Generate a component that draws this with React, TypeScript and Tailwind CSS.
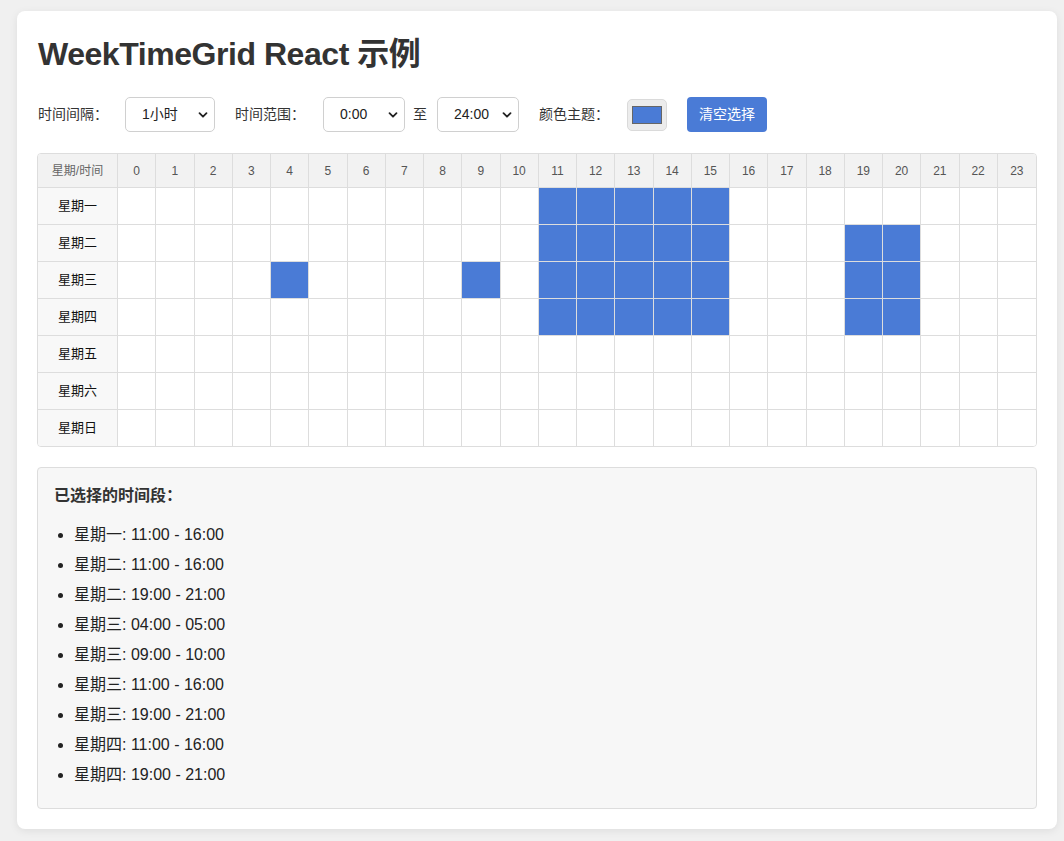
import React from "react";

const FONT = { fontFamily: '"Liberation Sans", "Noto Sans CJK SC", sans-serif' };

const days = ["星期一", "星期二", "星期三", "星期四", "星期五", "星期六", "星期日"];
const hours = Array.from({ length: 24 }, (_, i) => i);

// selected hours per day index
const selected: Record<number, number[]> = {
  0: [11, 12, 13, 14, 15],
  1: [11, 12, 13, 14, 15, 19, 20],
  2: [4, 9, 11, 12, 13, 14, 15, 19, 20],
  3: [11, 12, 13, 14, 15, 19, 20],
};

const ranges = [
  "星期一: 11:00 - 16:00",
  "星期二: 11:00 - 16:00",
  "星期二: 19:00 - 21:00",
  "星期三: 04:00 - 05:00",
  "星期三: 09:00 - 10:00",
  "星期三: 11:00 - 16:00",
  "星期三: 19:00 - 21:00",
  "星期四: 11:00 - 16:00",
  "星期四: 19:00 - 21:00",
];

function Chevron() {
  return (
    <svg width="10" height="10" viewBox="0 0 10 10" className="shrink-0">
      <path d="M1.5 3.2 L5 6.7 L8.5 3.2" fill="none" stroke="#222" strokeWidth="1.8" strokeLinecap="round" strokeLinejoin="round" />
    </svg>
  );
}

function FakeSelect({ value, width, className = "" }: { value: string; width: string; className?: string }) {
  return (
    <div
      className={`${width} ${className} h-[35px] flex items-center justify-between pl-[16px] pr-[6px] bg-white border border-[#d0d0d0] rounded-[5px] text-[14px] text-[#222]`}
    >
      <span>{value}</span>
      <Chevron />
    </div>
  );
}

export default function App() {
  return (
    <div className="min-h-screen bg-[#f0f0f0] pt-[11px] pb-[12px]" style={FONT}>
      <div className="ml-[17px] w-[1040px] bg-white rounded-[8px] shadow-[0_2px_8px_rgba(0,0,0,0.08)] px-[20px] pt-[23px] pb-[20px]">
        <h1 className="text-[32px] leading-[40px] font-bold text-[#333] tracking-[-0.45px] pl-[1px]">
          WeekTimeGrid React 示例
        </h1>

        {/* Controls */}
        <div className="mt-[23px] pl-[1px] flex items-center text-[14px] text-[#333]">
          <span>时间间隔：</span>
          <FakeSelect value="1小时" width="w-[90px]" className="ml-[17px]" />
          <span className="ml-[20px]">时间范围：</span>
          <FakeSelect value="0:00" width="w-[82px]" className="ml-[18px]" />
          <span className="ml-[8px]">至</span>
          <FakeSelect value="24:00" width="w-[82px]" className="ml-[10px]" />
          <span className="ml-[20px]">颜色主题：</span>
          <div className="ml-[18px] w-[40px] h-[32px] rounded-[5px] bg-[#ececec] border border-[#dadada] flex items-center justify-center">
            <div className="w-[30px] h-[18px] bg-[#4a7bd6] border border-[#666]" />
          </div>
          <button
            type="button"
            className="ml-[20px] h-[35px] px-[12px] rounded-[4px] bg-[#4a7bd6] text-white text-[14px]"
          >
            清空选择
          </button>
        </div>

        {/* Grid */}
        <div className="mt-[21px] w-[1000px] border border-[#dddddd] rounded-[4px] overflow-hidden">
          <div className="grid grid-cols-[80px_repeat(24,minmax(0,1fr))]">
            <div className="h-[34px] flex items-center justify-center bg-[#f2f2f2] border-r border-b border-[#dddddd] text-[12px] text-[#666]">
              星期/时间
            </div>
            {hours.map((h) => (
              <div
                key={h}
                className={`h-[34px] flex items-center justify-center bg-[#f2f2f2] border-b border-[#dddddd] text-[12px] text-[#555] ${h < 23 ? "border-r" : ""}`}
              >
                {h}
              </div>
            ))}
            {days.map((d, di) => (
              <React.Fragment key={d}>
                <div
                  className={`flex items-center justify-center bg-[#f8f8f8] border-r border-[#dddddd] text-[13px] text-[#111] ${di < 6 ? "border-b h-[37px]" : "h-[36px]"}`}
                >
                  {d}
                </div>
                {hours.map((h) => {
                  const on = (selected[di] || []).includes(h);
                  return (
                    <div
                      key={h}
                      className={`border-[#dddddd] ${on ? "bg-[#4a7bd6]" : "bg-white"} ${h < 23 ? "border-r" : ""} ${di < 6 ? "border-b h-[37px]" : "h-[36px]"}`}
                    />
                  );
                })}
              </React.Fragment>
            ))}
          </div>
        </div>

        {/* Selected ranges */}
        <div className="mt-[20px] w-[1000px] bg-[#f7f7f7] border border-[#dddddd] rounded-[4px] px-[16px] pt-[18px] pb-[18px]">
          <h4 className="text-[16px] leading-[20px] font-bold text-[#333]">已选择的时间段：</h4>
          <ul className="mt-[14px] pl-[20px] list-disc text-[16px] text-[#222]">
            {ranges.map((r, i) => (
              <li key={i} className="leading-[30px]">
                {r}
              </li>
            ))}
          </ul>
        </div>
      </div>
    </div>
  );
}
